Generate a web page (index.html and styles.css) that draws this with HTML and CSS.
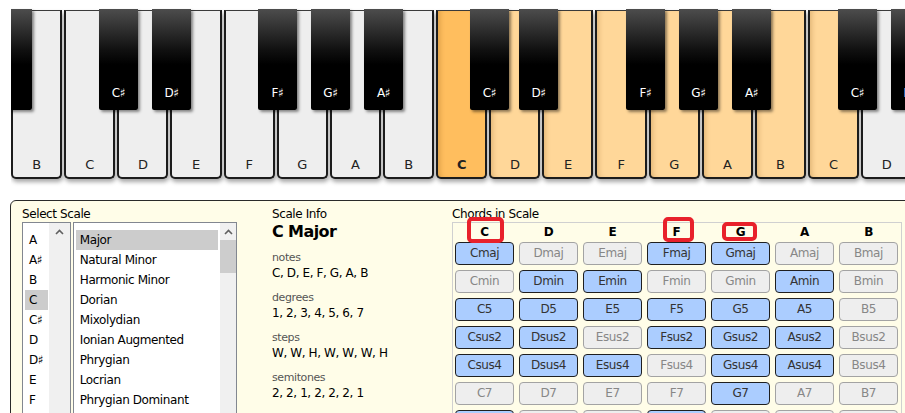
FILE: index.html
```html
<!DOCTYPE html>
<html>
<head>
<meta charset="utf-8">
<title>Scale Explorer</title>
<link rel="stylesheet" href="styles.css">
</head>
<body>
<div class="keyboard">
  <div class="whites">
    <div class="wk"><span>B</span></div>
    <div class="wk"><span>C</span></div>
    <div class="wk"><span>D</span></div>
    <div class="wk"><span>E</span></div>
    <div class="wk"><span>F</span></div>
    <div class="wk"><span>G</span></div>
    <div class="wk"><span>A</span></div>
    <div class="wk"><span>B</span></div>
    <div class="wk root"><span>C</span></div>
    <div class="wk inscale"><span>D</span></div>
    <div class="wk inscale"><span>E</span></div>
    <div class="wk inscale"><span>F</span></div>
    <div class="wk inscale"><span>G</span></div>
    <div class="wk inscale"><span>A</span></div>
    <div class="wk inscale"><span>B</span></div>
    <div class="wk inscale"><span>C</span></div>
    <div class="wk"><span>D</span></div>
  </div>
  <div class="bk k0"></div>
  <div class="bk k1"><span>C♯</span></div>
  <div class="bk k2"><span>D♯</span></div>
  <div class="bk k3"><span>F♯</span></div>
  <div class="bk k4"><span>G♯</span></div>
  <div class="bk k5"><span>A♯</span></div>
  <div class="bk k6"><span>C♯</span></div>
  <div class="bk k7"><span>D♯</span></div>
  <div class="bk k8"><span>F♯</span></div>
  <div class="bk k9"><span>G♯</span></div>
  <div class="bk k10"><span>A♯</span></div>
  <div class="bk k11"><span>C♯</span></div>
  <div class="bk k12"><span>D♯</span></div>
</div>

<div class="panel">
  <div class="col-select">
    <div class="heading">Select Scale</div>
    <div class="lists">
      <div class="listbox notes-list">
        <ul class="items">
          <li>A</li>
          <li>A♯</li>
          <li>B</li>
          <li class="selected">C</li>
          <li>C♯</li>
          <li>D</li>
          <li>D♯</li>
          <li>E</li>
          <li>F</li>
          <li>F♯</li>
        </ul>
        <div class="scrollbar">
          <div class="arrow"><svg width="9" height="6" viewBox="0 0 9 6"><polyline points="1,5 4.5,1.5 8,5" fill="none" stroke="#606060" stroke-width="1.6"/></svg></div>
        </div>
      </div>
      <div class="listbox scales-list">
        <ul class="items">
          <li class="selected">Major</li>
          <li>Natural Minor</li>
          <li>Harmonic Minor</li>
          <li>Dorian</li>
          <li>Mixolydian</li>
          <li>Ionian Augmented</li>
          <li>Phrygian</li>
          <li>Locrian</li>
          <li>Phrygian Dominant</li>
          <li>Lydian</li>
        </ul>
        <div class="scrollbar">
          <div class="arrow"><svg width="9" height="6" viewBox="0 0 9 6"><polyline points="1,5 4.5,1.5 8,5" fill="none" stroke="#606060" stroke-width="1.6"/></svg></div>
          <div class="thumb"></div>
        </div>
      </div>
    </div>
  </div>

  <div class="col-info">
    <div class="heading">Scale Info</div>
    <div class="scale-name">C Major</div>
    <div class="group"><div class="label">notes</div><div class="value">C, D, E, F, G, A, B</div></div>
    <div class="group"><div class="label">degrees</div><div class="value">1, 2, 3, 4, 5, 6, 7</div></div>
    <div class="group"><div class="label">steps</div><div class="value">W, W, H, W, W, W, H</div></div>
    <div class="group"><div class="label">semitones</div><div class="value">2, 2, 1, 2, 2, 2, 1</div></div>
  </div>

  <div class="col-chords">
    <div class="heading">Chords in Scale</div>
    <div class="grid-box">
      <div class="grid-head">
        <div>C</div><div>D</div><div>E</div><div>F</div><div>G</div><div>A</div><div>B</div>
      </div>
      <div class="grid">
        <div class="chord on">Cmaj</div><div class="chord off">Dmaj</div><div class="chord off">Emaj</div><div class="chord on">Fmaj</div><div class="chord on">Gmaj</div><div class="chord off">Amaj</div><div class="chord off">Bmaj</div>
        <div class="chord off">Cmin</div><div class="chord on">Dmin</div><div class="chord on">Emin</div><div class="chord off">Fmin</div><div class="chord off">Gmin</div><div class="chord on">Amin</div><div class="chord off">Bmin</div>
        <div class="chord on">C5</div><div class="chord on">D5</div><div class="chord on">E5</div><div class="chord on">F5</div><div class="chord on">G5</div><div class="chord on">A5</div><div class="chord off">B5</div>
        <div class="chord on">Csus2</div><div class="chord on">Dsus2</div><div class="chord off">Esus2</div><div class="chord on">Fsus2</div><div class="chord on">Gsus2</div><div class="chord on">Asus2</div><div class="chord off">Bsus2</div>
        <div class="chord on">Csus4</div><div class="chord on">Dsus4</div><div class="chord on">Esus4</div><div class="chord off">Fsus4</div><div class="chord on">Gsus4</div><div class="chord on">Asus4</div><div class="chord off">Bsus4</div>
        <div class="chord off">C7</div><div class="chord off">D7</div><div class="chord off">E7</div><div class="chord off">F7</div><div class="chord on">G7</div><div class="chord off">A7</div><div class="chord off">B7</div>
        <div class="chord on">Cmaj7</div><div class="chord off">Dmaj7</div><div class="chord off">Emaj7</div><div class="chord on">Fmaj7</div><div class="chord off">Gmaj7</div><div class="chord off">Amaj7</div><div class="chord off">Bmaj7</div>
      </div>
    </div>
    <div class="mark mark-c"></div>
    <div class="mark mark-f"></div>
    <div class="mark mark-g"></div>
  </div>
</div>
</body>
</html>
```
FILE: styles.css
```css
html, body {
  margin: 0;
  padding: 0;
  background: #ffffff;
  overflow: hidden;
}
body {
  width: 905px;
  height: 413px;
  font-family: "DejaVu Sans", Verdana, sans-serif;
  font-size: 12px;
  letter-spacing: -0.4px;
  color: #000;
}

/* ---------- keyboard ---------- */
.keyboard {
  position: relative;
  margin-left: 11px;
  height: 200px;
  padding-top: 10px;
  box-sizing: border-box;
  overflow: hidden;
}
.whites {
  display: flex;
  gap: 2px;
}
.wk {
  flex: 0 0 51.125px;
  height: 169px;
  box-sizing: border-box;
  background: #eeeeee;
  border: 2px solid #1c1c1c;
  border-top: 1px solid #3a3a3a;
  border-radius: 0 0 5px 5px;
  box-shadow: 1px 3px 4px rgba(0, 0, 0, 0.35);
  display: flex;
  align-items: flex-end;
  justify-content: center;
  padding-bottom: 4px;
  font-size: 13px;
  line-height: 16px;
  color: #222;
}
.wk.inscale {
  background: #ffd799;
  box-shadow: 1px 3px 4px rgba(0, 0, 0, 0.35), inset 5px 0 5px -3px rgba(120, 70, 0, 0.22);
}
.wk.root {
  background: #ffbe5e;
  font-weight: bold;
  box-shadow: 1px 3px 4px rgba(0, 0, 0, 0.35), inset 5px 0 5px -3px rgba(120, 70, 0, 0.25);
}
.bk {
  position: absolute;
  top: 9px;
  width: 39px;
  height: 101px;
  box-sizing: border-box;
  background: linear-gradient(#4d4d4d 0%, #111 40%, #000 55%, #000 100%);
  border-radius: 0 0 2px 2px;
  box-shadow: 2px 2px 3px rgba(0, 0, 0, 0.45);
  display: flex;
  align-items: flex-end;
  justify-content: center;
  padding-bottom: 10px;
  color: #ffffff;
  font-size: 12px;
  line-height: 14px;
}
.k0 { left: -18px; }
.k1 { left: 88px; }
.k2 { left: 141px; }
.k3 { left: 247px; }
.k4 { left: 300px; }
.k5 { left: 353px; }
.k6 { left: 459px; }
.k7 { left: 508px; }
.k8 { left: 615px; }
.k9 { left: 668px; }
.k10 { left: 721px; }
.k11 { left: 827px; }
.k12 { left: 880px; }

/* ---------- panel ---------- */
.panel {
  margin-left: 10px;
  width: 940px;
  height: 260px;
  box-sizing: border-box;
  border: 1px solid #2a2a2a;
  border-radius: 6px;
  background: #fffde8;
  padding: 6px 0 0 11px;
  display: flex;
}
.heading {
  line-height: 15px;
  height: 15px;
}
.col-select {
  width: 215px;
  margin-right: 35px;
}
.lists {
  display: flex;
  gap: 2px;
}
.listbox {
  height: 240px;
  box-sizing: border-box;
  border: 1px solid #828790;
  background: #ffffff;
  display: flex;
}
.notes-list { width: 49px; }
.scales-list { width: 165px; }
.items {
  list-style: none;
  margin: 0;
  padding: 7px 0 0 2px;
}
.items li {
  height: 20px;
  line-height: 20px;
  padding-left: 4px;
  white-space: nowrap;
}
.items li.selected { background: #cccccc; }
.notes-list .items { width: 23px; }
.scales-list .items { width: 142px; }
.scrollbar {
  margin-left: auto;
  background: #f0f0f0;
  display: flex;
  flex-direction: column;
}
.notes-list .scrollbar { width: 21px; }
.scales-list .scrollbar { width: 16px; }
.arrow {
  height: 17px;
  display: flex;
  align-items: center;
  justify-content: center;
}
.thumb {
  height: 33px;
  background: #cdcdcd;
}

/* ---------- info ---------- */
.col-info { width: 180px; }
.scale-name {
  font-size: 16px;
  font-weight: bold;
  line-height: 20px;
  letter-spacing: -0.6px;
}
.group { margin-top: 8px; }
.label {
  font-size: 11px;
  line-height: 15px;
  color: #555;
}
.value { line-height: 17px; }

/* ---------- chords ---------- */
.col-chords {
  position: relative;
  width: 450px;
}
.grid-box {
  border: 1px solid #d0d0d0;
  padding: 0 3px 0 2px;
  height: 200px;
}
.grid-head {
  display: grid;
  grid-template-columns: repeat(7, 59px);
  column-gap: 5px;
  height: 19px;
  line-height: 19px;
  text-align: center;
  font-weight: bold;
}
.grid {
  display: grid;
  grid-template-columns: repeat(7, 59px);
  column-gap: 5px;
  row-gap: 5px;
}
.chord {
  height: 23px;
  box-sizing: border-box;
  border: 1px solid;
  border-radius: 4px;
  text-align: center;
  line-height: 21px;
}
.chord.on {
  background: #abcdff;
  border-color: #1f1f1f;
  color: #333;
}
.chord.off {
  background: #eeeeee;
  border-color: #a3a3a3;
  color: #878787;
}
.mark {
  position: absolute;
  box-sizing: border-box;
  border: 4px solid #e8212b;
  border-radius: 5px;
}
.mark-c { left: 15px; top: 10px; width: 37px; height: 26px; }
.mark-f { left: 211px; top: 10px; width: 31px; height: 25px; }
.mark-g { left: 270px; top: 15px; width: 35px; height: 19px; }
```
